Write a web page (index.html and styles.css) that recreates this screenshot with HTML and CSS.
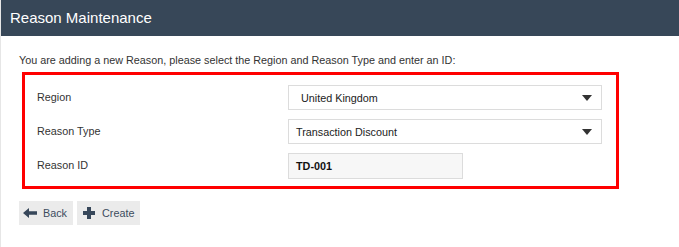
FILE: index.html
```html
<!DOCTYPE html>
<html lang="en">
<head>
<meta charset="utf-8">
<title>Reason Maintenance</title>
<link rel="stylesheet" href="styles.css">
</head>
<body>
<div class="page">
  <header class="header">Reason Maintenance</header>
  <main class="content">
    <p class="intro">You are adding a new Reason, please select the Region and Reason Type and enter an ID:</p>
    <section class="box">
      <div class="row">
        <label class="label">Region</label>
        <div class="select select-region"><span>United Kingdom</span><span class="caret"></span></div>
      </div>
      <div class="row">
        <label class="label">Reason Type</label>
        <div class="select"><span>Transaction Discount</span><span class="caret"></span></div>
      </div>
      <div class="row">
        <label class="label">Reason ID</label>
        <div class="input">TD-001</div>
      </div>
    </section>
    <div class="actions">
      <button class="btn btn-back">
        <svg class="icon" viewBox="0 0 14 10" width="14" height="10"><path d="M0 5 L6 0 L6 3.2 L14 3.2 L14 6.8 L6 6.8 L6 10 Z" fill="#37475a"/></svg>
        <span>Back</span>
      </button>
      <button class="btn btn-create">
        <svg class="icon" viewBox="0 0 12 12" width="12" height="12"><path d="M4 0 H8 V4 H12 V8 H8 V12 H4 V8 H0 V4 H4 Z" fill="#37475a"/></svg>
        <span>Create</span>
      </button>
    </div>
  </main>
</div>
</body>
</html>
```

FILE: styles.css
```css
html, body {
  margin: 0;
  padding: 0;
  background: #ffffff;
}

body {
  font-family: "Liberation Sans", Arial, sans-serif;
  font-size: 10.8px;
  color: #333333;
}

.page {
  border-left: 1px solid #e6e6e6;
  min-height: 247px;
  box-sizing: border-box;
}

.header {
  height: 36px;
  background: #374758;
  color: #ffffff;
  font-size: 15px;
  line-height: 36px;
  padding-left: 9px;
}

.content {
  padding: 18px 0 0 18px;
}

.intro {
  margin: 0;
  line-height: 13px;
  color: #333;
}

.box {
  margin-top: 5px;
  margin-left: 3px;
  width: 597px;
  box-sizing: border-box;
  border: 3px solid #ff0000;
  padding: 10px 14px 8px 12px;
  display: grid;
  row-gap: 9px;
}

.row {
  display: grid;
  grid-template-columns: 251px 1fr;
  align-items: center;
  height: 25px;
}

.label {
  color: #333;
  position: relative;
  top: -1px;
}

.select {
  height: 25px;
  box-sizing: border-box;
  border: 1px solid #dcdcdc;
  background: #ffffff;
  display: flex;
  align-items: center;
  justify-content: space-between;
  padding: 0 9px 0 7px;
  color: #222;
}

.select-region {
  padding-left: 12px;
}

.caret {
  width: 0;
  height: 0;
  border-left: 5px solid transparent;
  border-right: 5px solid transparent;
  border-top: 6px solid #333;
}

.input {
  width: 175px;
  height: 26px;
  box-sizing: border-box;
  border: 1px solid #dcdcdc;
  background: #f7f7f7;
  display: flex;
  align-items: center;
  padding-left: 7px;
  color: #111;
  font-weight: bold;
}

.actions {
  display: flex;
  gap: 4px;
  margin-top: 12px;
  margin-left: 0;
}

.btn {
  height: 24px;
  border: none;
  background: #ebebeb;
  display: flex;
  align-items: center;
  padding: 0 6px 0 4px;
  gap: 6px;
  font-family: "Liberation Sans", Arial, sans-serif;
  font-size: 10.8px;
  color: #3d4c5e;
  cursor: pointer;
}

.btn-create {
  padding-left: 6px;
  gap: 7px;
}

.icon {
  display: block;
}
```
